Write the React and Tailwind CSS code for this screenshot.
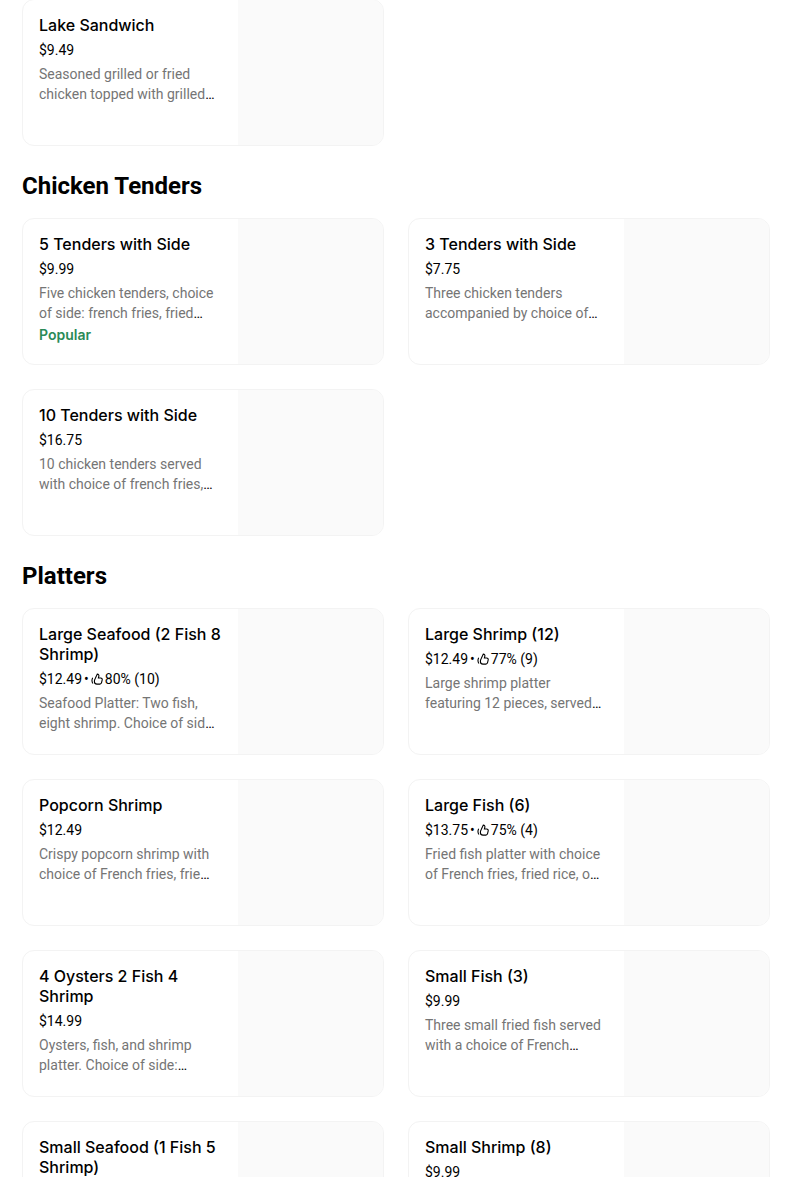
import React from 'react'

const sections = [
  {
    title: '',
    items: [
      { name: 'Lake Sandwich', price: '$9.49', lines: ['Seasoned grilled or fried', 'chicken topped with grilled'] },
    ],
  },
  {
    title: 'Chicken Tenders',
    items: [
      { name: '5 Tenders with Side', price: '$9.99', lines: ['Five chicken tenders, choice', 'of side: french fries, fried'], popular: true },
      { name: '3 Tenders with Side', price: '$7.75', lines: ['Three chicken tenders', 'accompanied by choice of'] },
      { name: '10 Tenders with Side', price: '$16.75', lines: ['10 chicken tenders served', 'with choice of french fries,'] },
    ],
  },
  {
    title: 'Platters',
    items: [
      { name: 'Large Seafood (2 Fish 8 Shrimp)', price: '$12.49', rating: '80% (10)', lines: ['Seafood Platter: Two fish,', 'eight shrimp. Choice of sid'] },
      { name: 'Large Shrimp (12)', price: '$12.49', rating: '77% (9)', lines: ['Large shrimp platter', 'featuring 12 pieces, served'] },
      { name: 'Popcorn Shrimp', price: '$12.49', lines: ['Crispy popcorn shrimp with', 'choice of French fries, frie'] },
      { name: 'Large Fish (6)', price: '$13.75', rating: '75% (4)', lines: ['Fried fish platter with choice', 'of French fries, fried rice, o'] },
      { name: '4 Oysters 2 Fish 4 Shrimp', price: '$14.99', lines: ['Oysters, fish, and shrimp', 'platter. Choice of side:'] },
      { name: 'Small Fish (3)', price: '$9.99', lines: ['Three small fried fish served', 'with a choice of French'] },
      { name: 'Small Seafood (1 Fish 5 Shrimp)' },
      { name: 'Small Shrimp (8)', price: '$9.99' },
    ],
  },
]

const ThumbIcon = () => (
  <svg viewBox="0 0 24 24" fill="none" stroke="currentColor" strokeWidth="2.2" className="h-3 w-3 shrink-0" aria-hidden="true">
    <path d="M8 12 12.6 2.2c2.4.2 3.6 2 3.1 4.2L14.8 10h4.6c2.2 0 3.5 1.7 3 3.7l-1.3 5.7c-.4 1.8-1.6 2.8-3.4 2.8H12c-3.4 0-5.2-2.2-5.2-5.3 0-1.8.4-3.5 1.2-4.9Z" />
    <path d="M3.4 9.5c-2 3.7-2 7.6.4 11.5" />
  </svg>
)

const MenuItem = ({ item }) => (
  <li>
    <a href="#" className="flex h-[147px] overflow-hidden rounded-xl border border-[#f3f3f3] bg-white">
      <div className="min-w-0 flex-1 py-[15px] pl-4">
        <h3 className="pr-4 font-['Inter',sans-serif] text-base leading-5 font-medium">{item.name}</h3>
        {item.price && (
          <div className="mt-[5px] flex items-center gap-[2px] text-sm leading-5">
            <span>{item.price}</span>
            {item.rating && (
              <>
                <span>•</span>
                <ThumbIcon />
                <span>{item.rating}</span>
              </>
            )}
          </div>
        )}
        {item.lines && (
          <p className="mt-1 text-sm leading-5 whitespace-nowrap">
            <span className="text-[#757575]">
              {item.lines[0]}
              <br />
              {item.lines[1]}
            </span>
            …
          </p>
        )}
        {item.popular && (
          <p className="mt-0.5 font-['Inter',sans-serif] text-sm leading-5 font-semibold text-[#2a8a57]">Popular</p>
        )}
      </div>
      <div className="w-[145px] shrink-0 bg-[#fafafa]" />
    </a>
  </li>
)

const App = () => {
  return (
    <main className="h-screen overflow-hidden bg-white pr-[34px] pl-[22px] font-['Roboto',sans-serif] text-black">
      <div className="-mt-px">
        {sections.map((section) => (
          <section key={section.title}>
            {section.title && (
              <h2 className="pt-6 pb-4 text-2xl leading-8 font-bold">{section.title}</h2>
            )}
            <ul className="grid grid-cols-2 gap-6">
              {section.items.map((item) => (
                <MenuItem key={item.name} item={item} />
              ))}
            </ul>
          </section>
        ))}
      </div>
    </main>
  )
}

export default App
